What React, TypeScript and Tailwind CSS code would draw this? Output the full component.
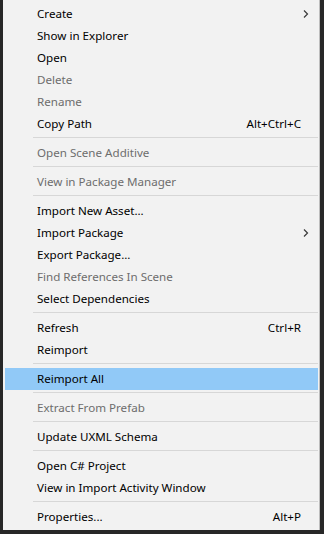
import React from "react";

type Item =
  | { sep: true }
  | { label: string; disabled?: boolean; shortcut?: string; sub?: boolean; active?: boolean; sep?: false };

const items: Item[] = [
  { label: "Create", sub: true },
  { label: "Show in Explorer" },
  { label: "Open" },
  { label: "Delete", disabled: true },
  { label: "Rename", disabled: true },
  { label: "Copy Path", shortcut: "Alt+Ctrl+C" },
  { sep: true },
  { label: "Open Scene Additive", disabled: true },
  { sep: true },
  { label: "View in Package Manager", disabled: true },
  { sep: true },
  { label: "Import New Asset..." },
  { label: "Import Package", sub: true },
  { label: "Export Package..." },
  { label: "Find References In Scene", disabled: true },
  { label: "Select Dependencies" },
  { sep: true },
  { label: "Refresh", shortcut: "Ctrl+R" },
  { label: "Reimport" },
  { sep: true },
  { label: "Reimport All", active: true },
  { sep: true },
  { label: "Extract From Prefab", disabled: true },
  { sep: true },
  { label: "Update UXML Schema" },
  { sep: true },
  { label: "Open C# Project" },
  { label: "View in Import Activity Window" },
  { sep: true },
  { label: "Properties...", shortcut: "Alt+P" },
];

function Chevron() {
  return (
    <svg width="6" height="8" viewBox="0 0 6 8" className="block">
      <path d="M1 0.5 L4.5 4 L1 7.5" fill="none" stroke="#3a3a3a" strokeWidth="1.2" />
    </svg>
  );
}

export default function App() {
  return (
    <div
      className="w-[324px] h-[534px] overflow-hidden bg-[#272727] flex flex-col"
      style={{ fontFamily: '"Noto Sans", "Noto Sans CJK KR", sans-serif' }}
    >
      <div className="ml-[3px] w-[317px] h-[530px] bg-[#f2f2f2] border-r border-[#bdbdbd] pt-[3px] flex flex-col">
        {items.map((it, i) =>
          it.sep ? (
            <div key={i} className="h-[7px] flex items-start pt-[2px] pl-[30px] pr-[1px]">
              <div className="h-px w-full bg-[#d7d7d7]" />
            </div>
          ) : (
            <div
              key={i}
              className={`h-[22px] ml-[2px] mr-[1px] pl-[32px] pr-[17px] flex items-center text-[11.6px] leading-none ${
                it.active ? "bg-[#91c9f7]" : ""
              } ${it.disabled ? "text-[#6d6d6d]" : "text-black"}`}
            >
              <span className="flex-1">{it.label}</span>
              {it.shortcut && <span>{it.shortcut}</span>}
              {it.sub && (
                <span className="mr-[-8px]">
                  <Chevron />
                </span>
              )}
            </div>
          )
        )}
      </div>
    </div>
  );
}
